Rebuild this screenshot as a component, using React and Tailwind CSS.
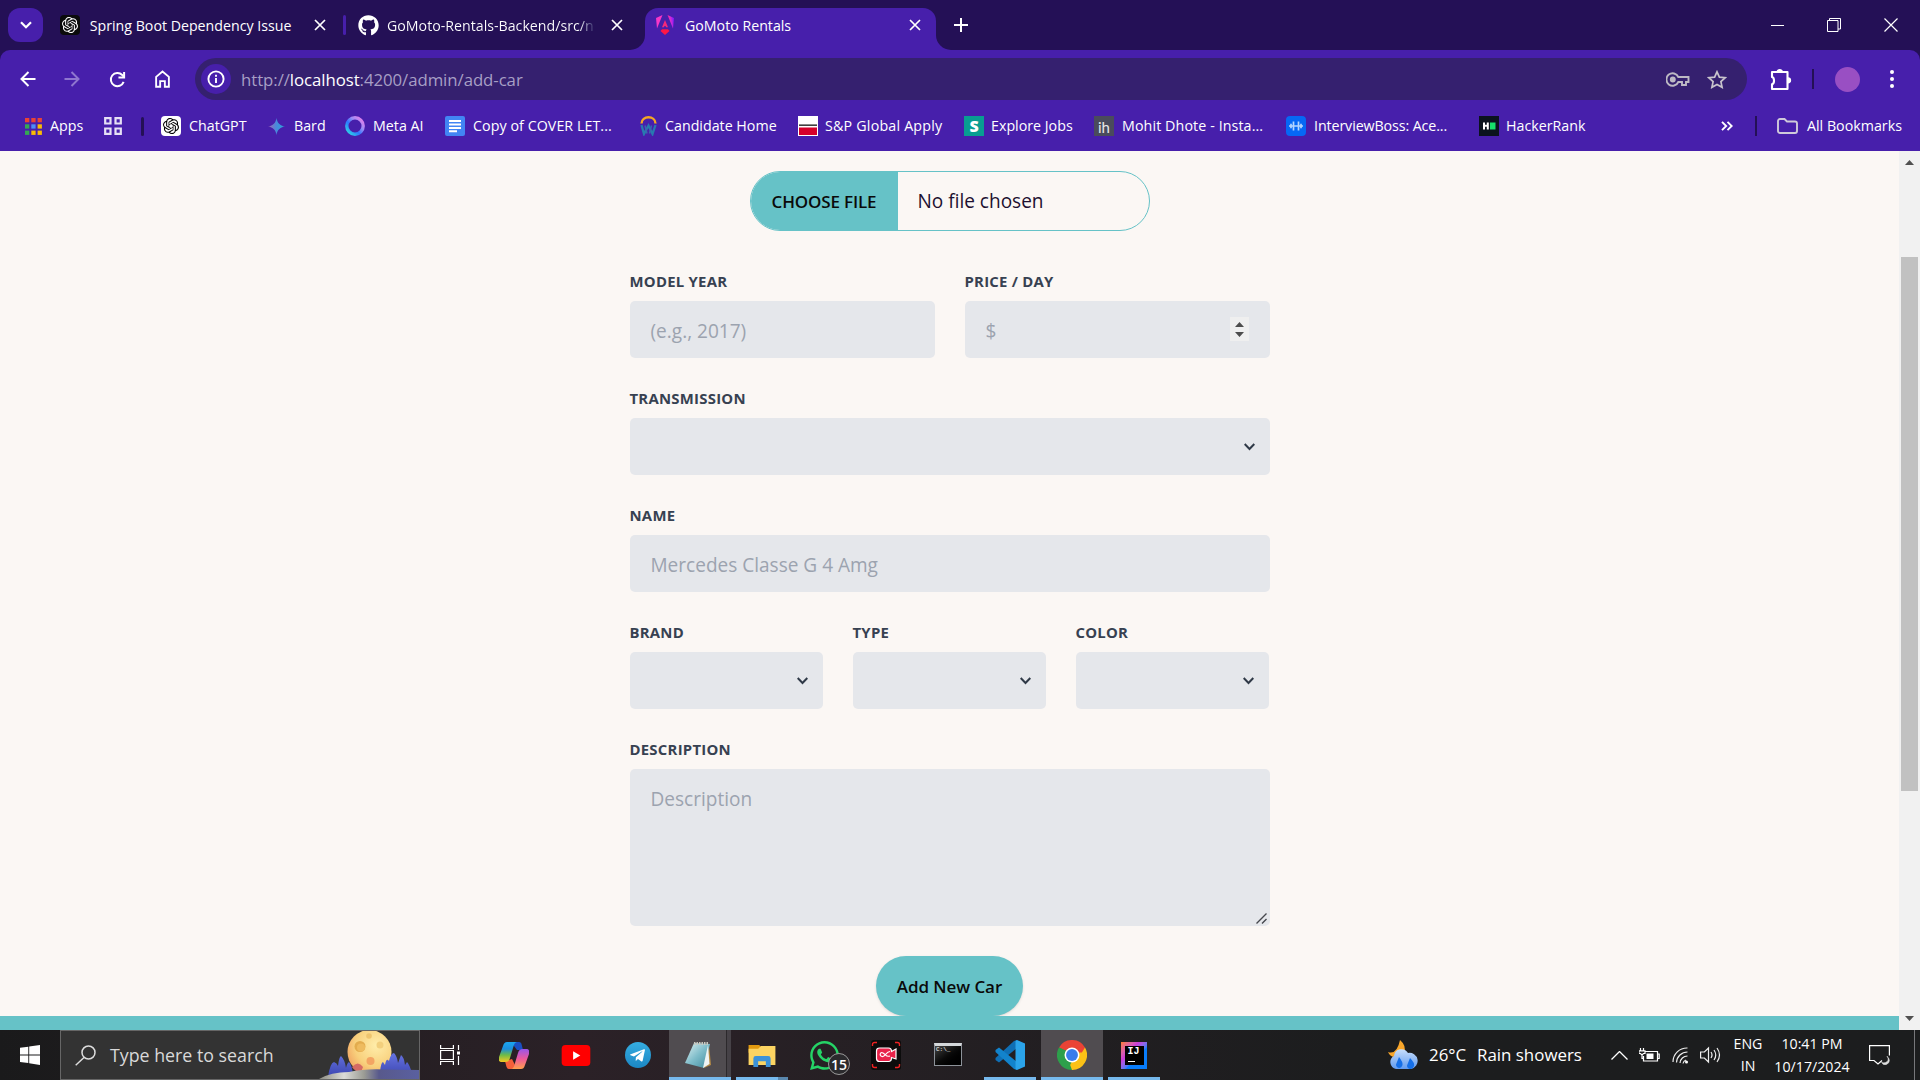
import React from "react";
import { SiOpenai } from "react-icons/si";
import { FaGithub, FaWhatsapp, FaTelegramPlane } from "react-icons/fa";

const Close = ({ className = "" }) => (
  <svg viewBox="0 0 12 12" className={`size-3 shrink-0 ${className}`} fill="none" stroke="#fff" strokeWidth="1.7">
    <path d="M1 1l10 10M11 1L1 11" />
  </svg>
);

const AngularLogo = () => (
  <svg viewBox="0 0 20 20" className="size-5 shrink-0">
    <defs>
      <linearGradient id="ng" x1="0" y1=".6" x2="1" y2=".3">
        <stop offset="0" stopColor="#ff2a6a" />
        <stop offset=".45" stopColor="#e02bd0" />
        <stop offset="1" stopColor="#7a18ff" />
      </linearGradient>
    </defs>
    <path d="M7.5 0L1 3l1 10.5z" fill="#f637c8" />
    <path d="M12.5 0L19 3l-1 10.5z" fill="url(#ng)" />
    <path d="M10 5l-3 7.3h1.9l.6-1.4h1l.6 1.4H13z" fill="#f5297a" />
    <path d="M5.5 16L7 14.3h6l1.5 1.7L10 20z" fill="#ff1745" />
  </svg>
);

function TabStrip() {
  return (
    <div className="flex h-[50px] bg-[#241056] text-[14.2px] text-white">
      <div className="ml-2 mt-2 flex h-[34px] w-[35px] items-center justify-center rounded-[12px] bg-[#471fab]">
        <svg viewBox="0 0 12 8" className="h-2 w-3" fill="none" stroke="#fff" strokeWidth="2.2"><path d="M1 1.2l5 5 5-5" /></svg>
      </div>
      <div className="flex h-[50px] w-[303px] items-center pl-[17px]">
        <span className="flex size-5 items-center justify-center rounded bg-[#0b0b0b]"><SiOpenai className="size-4" /></span>
        <span className="mt-px ml-2.5 w-[227px] whitespace-nowrap">Spring Boot Dependency Issue</span>
        <Close />
        <span className="ml-[17px] h-5 w-[3px] rounded bg-[#471fab]" />
      </div>
      <div className="flex h-[50px] w-[284px] items-center pl-[12px]">
        <FaGithub className="size-[21px] shrink-0" />
        <span className="mt-px ml-[8px] w-[209px] whitespace-nowrap bg-gradient-to-r from-white from-92% to-[#241056] bg-clip-text text-transparent">GoMoto-Rentals-Backend/src/n</span>
        <Close className="ml-[15px]" />
      </div>
      <div className="flex w-[321px] items-end">
        <span className="h-[15px] w-[15px] bg-[#471fab]"><i className="block size-full rounded-br-[15px] bg-[#241056]" /></span>
        <div className="flex h-[42px] w-[291px] items-center rounded-t-[13px] bg-[#471fab] pb-2 pl-[10px]">
          <AngularLogo />
          <span className="mt-px ml-2.5 w-[224px]">GoMoto Rentals</span>
          <Close />
        </div>
        <span className="h-[15px] w-[15px] bg-[#471fab]"><i className="block size-full rounded-bl-[15px] bg-[#241056]" /></span>
      </div>
      <svg viewBox="0 0 14 14" className="ml-[3px] mt-[18px] size-3.5" fill="none" stroke="#fff" strokeWidth="2"><path d="M7 0v14M0 7h14" /></svg>
      <div className="ml-auto mr-[22px] flex items-center gap-[43px]">
        <span className="h-px w-[13px] bg-white" />
        <svg viewBox="0 0 14 14" className="size-3.5" fill="none" stroke="#fff"><path d="M.5 2.5h10.5v11H.5zM2.5 2.5V.5h11v10.5H11" /></svg>
        <svg viewBox="0 0 14 14" className="size-3.5" fill="none" stroke="#fff" strokeWidth="1.2"><path d="M.5.5l13 13M13.5.5l-13 13" /></svg>
      </div>
    </div>
  );
}

function Toolbar() {
  return (
    <div className="bg-[#241056]">
      <div className="flex h-[58px] items-center rounded-t-[10px] bg-[#471fab] pl-5">
        <svg viewBox="0 0 16 16" className="size-4" fill="none" stroke="#fff" strokeWidth="2"><path d="M15.5 8H2M8.5 1L1.5 8l7 7" /></svg>
        <svg viewBox="0 0 16 16" className="ml-7 size-4" fill="none" stroke="#8f76cf" strokeWidth="2"><path d="M.5 8H14M7.5 1l7 7-7 7" /></svg>
        <svg viewBox="0 0 18 18" className="ml-[29px] size-[17px]" fill="none" stroke="#fff" strokeWidth="2.1"><path d="M15.5 11.5A7 7 0 1 1 14 4.2l1.5 1.8" /><path d="M16 1v5.8h-6" /></svg>
        <svg viewBox="0 0 16 19" className="ml-[29px] h-[18px] w-[15px]" fill="none" stroke="#fff" strokeWidth="2"><path d="M1.2 7.2L8 1.5l6.8 5.7v10.6h-4.3v-6h-5v6H1.2z" /></svg>
        <div className="ml-[25px] flex h-[42px] w-[1552px] items-center rounded-full bg-[#35206f] pl-1.5">
          <span className="flex size-[30px] items-center justify-center rounded-full bg-[#471fab]">
            <svg viewBox="0 0 18 18" className="size-[18px]" fill="none" stroke="#fff" strokeWidth="1.9"><circle cx="9" cy="9" r="7.6" /><path d="M9 8v5M9 4.8v1.9" /></svg>
          </span>
          <span className="mt-px ml-[10px] text-[16.8px] tracking-[-0.06px] text-[#a79fc5]">http://<span className="text-white">localhost</span>:4200/admin/add-car</span>
          <svg viewBox="0 0 24 15" className="ml-auto h-[15px] w-6" fill="none" stroke="#bdb9c4" strokeWidth="1.9"><path d="M12.3 5A6.2 6.2 0 1 0 12.3 10h3.7v3h4v-3h2.5V5z" /><circle cx="6.8" cy="7.5" r="2" fill="#bdb9c4" /></svg>
          <svg viewBox="0 0 20 19" className="ml-[17px] mr-5 h-[19px] w-5" fill="none" stroke="#c8c4cc" strokeWidth="1.7"><path d="M10 1.8l2.4 5.3 5.8.6-4.3 3.9 1.2 5.7-5.1-2.9-5.1 2.9 1.2-5.7L1.8 7.7l5.8-.6z" /></svg>
        </div>
        <svg viewBox="0 0 22 23" className="ml-[23px] h-[23px] w-[22px]" fill="none" stroke="#fff" strokeWidth="2.1"><path d="M2 4h15.5v17H2v-4.700c2.700-.8 2.700-6.500 0-7.300z" strokeLinejoin="round" /><path d="M7.500 4a2.300 2.500 0 0 1 4.500 0zM18 10.200a2 2 0 0 1 0 4.200z" fill="#fff" /></svg>
        <span className="ml-5 h-5 w-0.5 bg-[#241056]" />
        <span className="ml-[21px] size-[25px] rounded-full bg-[#994fc3]" />
        <svg viewBox="0 0 4 18" className="ml-[30px] h-[18px] w-1" fill="#fff"><circle cx="2" cy="2" r="2" /><circle cx="2" cy="9" r="2" /><circle cx="2" cy="16" r="2" /></svg>
      </div>
    </div>
  );
}

const Bookmark = ({ w, gap = "gap-2", label, children }) => (
  <div className={`flex shrink-0 items-center whitespace-nowrap ${w} ${gap}`}>{children}<span>{label}</span></div>
);

const appDots = ["#ea4335", "#ea4335", "#ea4335", "#34a853", "#4b8df8", "#fbbc04", "#34a853", "#fbbc04", "#fbbc04"];

function Bookmarks() {
  return (
    <div className="flex h-[43px] items-center bg-[#471fab] pb-[7px] pl-[25px] text-[14.25px] text-white">
      <Bookmark w="w-[79px]" label="Apps">
        <svg viewBox="0 0 17 17" className="size-[17px]">{appDots.map((c, i) => <rect key={i} x={(i % 3) * 6.3} y={Math.floor(i / 3) * 6.3} width="4.3" height="4.3" fill={c} />)}</svg>
      </Bookmark>
      <svg viewBox="0 0 18 18" className="size-[18px]" fill="none" stroke="#e6e0f5" strokeWidth="2.2"><path d="M1.2 1.2h5.3v5.3H1.2zM11.5 1.2h5.3v5.3h-5.3zM1.2 11.5h5.3v5.3H1.2zM11.5 11.5h5.3v5.3h-5.3z" /></svg>
      <span className="ml-[19px] mr-[17px] h-[19px] w-[3px] rounded bg-[#241056]" />
      <Bookmark w="w-[107px]" label="ChatGPT"><span className="flex size-5 items-center justify-center rounded bg-white"><SiOpenai className="size-4 text-black" /></span></Bookmark>
      <Bookmark w="w-[77px]" gap="gap-[9px]" label="Bard">
        <svg viewBox="0 0 17 17" className="size-[17px]"><defs><linearGradient id="bd"><stop stopColor="#a166b4" /><stop offset=".5" stopColor="#4889dc" /><stop offset="1" stopColor="#2aa3d6" /></linearGradient></defs><path d="M8.5 0c.7 5 3.5 7.8 8.5 8.5-5 .7-7.8 3.5-8.5 8.5C7.8 12 5 9.2 0 8.5 5 7.8 7.8 5 8.5 0z" fill="url(#bd)" /></svg>
      </Bookmark>
      <Bookmark w="w-[100px]" label="Meta AI">
        <svg viewBox="0 0 20 20" className="size-5"><defs><linearGradient id="me" x1="1" y1="0" x2="0" y2="1"><stop stopColor="#f47be8" /><stop offset=".35" stopColor="#9b8cf5" /><stop offset=".6" stopColor="#2c77ff" /><stop offset="1" stopColor="#2fe5df" /></linearGradient></defs><circle cx="10" cy="10" r="8.2" fill="none" stroke="url(#me)" strokeWidth="3.4" /></svg>
      </Bookmark>
      <Bookmark w="w-[195px]" label={<span className="tracking-[0.06px]">Copy of COVER LET...</span>}>
        <svg viewBox="0 0 20 20" className="size-5"><rect width="20" height="20" rx="2" fill="#4285f4" /><path d="M4 5h12M4 8.5h12M4 12h12M4 15.2h8" stroke="#fff" strokeWidth="1.9" /></svg>
      </Bookmark>
      <Bookmark w="w-[158px]" label="Candidate Home">
        <svg viewBox="0 0 17 20" className="h-5 w-[17px]" fill="none"><path d="M1.5 7.5C1.5-.8 15.5-.8 15.5 7.500" stroke="#f5a623" strokeWidth="2.4" /><path d="M1.500 9l2.500 9 4.500-8.500L12.500 18l3-9" stroke="#2879b0" strokeWidth="2.3" /><path d="M5 9.500l2 8M11.500 9.500l-2 8" stroke="#3a66b0" strokeWidth="1.5" /></svg>
      </Bookmark>
      <Bookmark w="w-[166px]" gap="gap-[7px]" label={<span className="tracking-[0.2px]">S&P Global Apply</span>}>
        <svg viewBox="0 0 20 20" className="size-5"><rect width="20" height="20" fill="#fff" /><path d="M1 8.500h18v1.300H1z" fill="#111" /><path d="M1 11.500h18V19H1z" fill="#d6002a" /></svg>
      </Bookmark>
      <Bookmark w="w-[130px]" gap="gap-[7px]" label="Explore Jobs"><span className="flex size-5 items-center justify-center bg-[#089d92] text-[16px] leading-5 font-extrabold">S</span></Bookmark>
      <Bookmark w="w-[192px]" label={<span className="tracking-[0.1px]">Mohit Dhote - Insta...</span>}><span className="flex size-5 items-center justify-center bg-[#4a4b5c] pt-0.5 font-[Lato] text-[15px] leading-none text-[#e8e8e8]">ih</span></Bookmark>
      <Bookmark w="w-[193px]" label={<span className="tracking-[-0.1px]">InterviewBoss: Ace...</span>}>
        <svg viewBox="0 0 20 20" className="size-5" fill="none" stroke="#b4d5ff" strokeWidth="1.7"><rect width="20" height="20" rx="4" fill="#0668f5" stroke="none" /><path d="M3 10h14M7.5 5.5v9M12.5 5.5v9M5 7.8v4.4M15 7.8v4.4" /></svg>
      </Bookmark>
      <Bookmark w="w-[242px]" gap="gap-[7px]" label="HackerRank">
        <svg viewBox="0 0 20 20" className="size-5"><rect width="20" height="20" fill="#0b131e" /><path d="M4 6.5h2v2.300h1.800V6.500h2v7h-2v-2.800H6v2.800H4z" fill="#fff" /><path d="M11 6.500h5.500v7H11z" fill="#17e06b" /></svg>
      </Bookmark>
      <svg viewBox="0 0 12 10" className="h-2.5 w-3" fill="none" stroke="#fff" strokeWidth="1.9"><path d="M1 .8L5.2 5 1 9.2M6.5.8L10.700 5 6.500 9.200" /></svg>
      <span className="ml-[22px] mr-5 h-5 w-0.5 bg-[#241056]" />
      <Bookmark w="w-[130px]" gap="gap-[9px]" label="All Bookmarks">
        <svg viewBox="0 0 21 16" className="h-4 w-[21px]" fill="none" stroke="#cfc9da" strokeWidth="1.9"><path d="M1 3a2 2 0 0 1 2-2h4.500l2.500 2.500H18a2 2 0 0 1 2 2V13a2 2 0 0 1-2 2H3a2 2 0 0 1-2-2z" /></svg>
      </Bookmark>
    </div>
  );
}

const Field = ({ label, placeholder, type, w = "w-full", h = "h-[57px]" }) => (
  <div className={w}>
    <div className="mb-2.5 h-5 text-[14.9px] leading-5 font-bold tracking-[0.25px] text-[#374151] uppercase">{label}</div>
    <div className={`relative flex justify-between rounded-[5px] bg-[#e5e7eb] px-[21px] pt-[15px] text-[19.05px] leading-[30px] text-[#9ca3af] ${h}`}>
      <span>{placeholder}</span>
      {type === "number" && (
        <svg viewBox="0 0 19 24" className="mt-px h-6 w-[19px]"><rect width="19" height="24" fill="#efefef" /><path d="M5 10l4.5-5 4.5 5zM5 15l4.5 5 4.5-5z" fill="#4d4d4d" /></svg>
      )}
      {type === "select" && (
        <svg viewBox="0 0 11 8" className="mt-[10px] -mr-[6.5px] h-2 w-[11px]" fill="none" stroke="#2f3947" strokeWidth="2"><path d="M.7 1l4.8 5 4.8-5" /></svg>
      )}
      {type === "area" && (
        <svg viewBox="0 0 11 11" className="absolute right-[3px] bottom-[2px] size-[11px]" stroke="#45474d" strokeWidth="1.4"><path d="M.5 10.5l10-10M6 10.5L10.5 6" /></svg>
      )}
    </div>
  </div>
);

function Page() {
  return (
    <div className="flex h-[879px] bg-[#fbf7f4]">
      <div className="flex grow flex-col items-center pt-5">
        <div className="flex h-[60px] w-[400px] overflow-hidden rounded-[30px] border border-[#66c2c7] text-[19.05px] text-[#1d1030]">
          <span className="flex w-[147px] items-center justify-center bg-[#66c2c7] pt-px text-[17px] font-semibold tracking-[-0.15px] text-[#0a0a0a]">CHOOSE FILE</span>
          <span className="flex items-center pt-px pl-5">No file chosen</span>
        </div>
        <div className="mt-10 flex w-[640px] flex-col gap-[30px]">
          <div className="flex gap-[30px]">
            <Field label="Model Year" placeholder="(e.g., 2017)" w="w-[305px]" />
            <Field label="Price / Day" placeholder="$" type="number" w="w-[305px]" />
          </div>
          <Field label="Transmission" type="select" />
          <Field label="Name" placeholder="Mercedes Classe G 4 Amg" />
          <div className="flex gap-[30px]">
            <Field label="Brand" type="select" w="w-[193px]" />
            <Field label="Type" type="select" w="w-[193px]" />
            <Field label="Color" type="select" w="w-[193px]" />
          </div>
          <Field label="Description" placeholder="Description" type="area" h="h-[157px]" />
        </div>
        <button className="mt-[30px] h-[60px] w-[147px] shrink-0 rounded-[30px] bg-[#66c2c7] pt-px text-[17px] font-semibold tracking-[-0.08px] text-[#0a0a0a] shadow-sm">Add New Car</button>
        <div className="h-3.5 w-full shrink-0 bg-[#66c2c7]" />
      </div>
      <div className="flex w-[21px] flex-col items-center bg-[#f1f1f1]">
        <svg viewBox="0 0 9 5" className="mt-[9px] h-[5px] w-[9px]"><path d="M0 5l4.5-5L9 5z" fill="#505050" /></svg>
        <div className="mt-[92px] h-[534px] w-[17px] bg-[#c1c1c1]" />
        <svg viewBox="0 0 9 5" className="mt-auto mb-[9px] h-[5px] w-[9px]"><path d="M0 0l4.5 5L9 0z" fill="#505050" /></svg>
      </div>
    </div>
  );
}

const MoonArt = () => (
  <svg viewBox="0 0 100 48" className="ml-auto h-12 w-[100px]">
    <defs>
      <radialGradient id="mn" cx=".65" cy=".35" r=".8"><stop stopColor="#ffedaa" /><stop offset=".6" stopColor="#f8d07c" /><stop offset="1" stopColor="#ef9a5c" /></radialGradient>
      <linearGradient id="hl"><stop stopColor="#8b8a80" /><stop offset=".25" stopColor="#dcdcd8" /><stop offset=".45" stopColor="#9b9c94" /><stop offset=".6" stopColor="#58598c" /><stop offset="1" stopColor="#5a60a0" /></linearGradient>
      <linearGradient id="tr" x2="0" y2="1"><stop stopColor="#6673e0" /><stop offset="1" stopColor="#3b45b0" /></linearGradient>
    </defs>
    <circle cx="50.5" cy="21" r="22" fill="url(#mn)" />
    <circle cx="41" cy="15.5" r="5.5" fill="#e3ac4e" /><circle cx="42" cy="16.5" r="4" fill="#eebb5f" />
    <circle cx="61" cy="14" r="3.5" fill="#f2cf7d" /><circle cx="50" cy="5" r="2.8" fill="#eec46e" />
    <circle cx="51.5" cy="30" r="4" fill="#f3a563" /><path d="M33 36q6-7 11 0l-2 5q-6 0-9-5z" fill="#d46a64" />
    <path d="M9 46q2-14 6-15 3 1 4 4 1-9 3-10 4 4 5 12 1-5 3-6 3 3 4 13zM61 41q1-10 3-10l2 3q1-6 3-5l1 1q2-8 5-8 3 3 4 10l3-8q3 2 4 10l2-3q2 2 4 8z" fill="url(#tr)" />
    <path d="M0 48q12-7 30-7 16-3.500 36-2.500L100 39v9z" fill="url(#hl)" />
  </svg>
);

const CopilotLogo = () => (
  <svg viewBox="0 0 30 27" className="h-[27px] w-[30px]">
    <defs>
      <linearGradient id="c1" x2="0" y2="1"><stop stopColor="#1ba6f0" /><stop offset=".35" stopColor="#1c8edc" /><stop offset=".65" stopColor="#6dbb48" /><stop offset="1" stopColor="#f6c921" /></linearGradient>
      <linearGradient id="c2" x2="0" y2="1"><stop stopColor="#9a55ea" /><stop offset=".5" stopColor="#ee5a9a" /><stop offset="1" stopColor="#ffa04b" /></linearGradient>
    </defs>
    <path d="M12 0h8c2 0 2.500 2 3 4l1 4h-6z" fill="#1a4fc4" />
    <path d="M18 27h-8c-2 0-2.500-2-3-4l-1-4 7-2z" fill="#f5603a" />
    <path d="M8 0h10c-2 0-3 2-4 6l-3 10c-1 3-2 4-5 4H3c-3 0-4-2-3-5L4 4c1-3 2-4 4-4z" fill="url(#c1)" />
    <path d="M22 27H12c2 0 3-2 4-6l3-10c1-3 2-4 5-4h3c3 0 4 2 3 5l-4 11c-1 3-2 4-4 4z" fill="url(#c2)" />
  </svg>
);

const NotepadIcon = () => (
  <svg viewBox="0 0 28 28" className="-ml-1 size-7">
    <defs><linearGradient id="np" x2="1" y2="1"><stop stopColor="#e2f2f3" /><stop offset=".5" stopColor="#7fbdca" /><stop offset="1" stopColor="#3e8a9c" /></linearGradient></defs>
    <path d="M25 4l2 20-7 3z" fill="#b58b45" />
    <path d="M10 2l16 1-6 24L1 22z" fill="url(#np)" />
    <path d="M24 4l1.500 19-6.500 4z" fill="#eef3f3" />
    <path d="M10 2.500h15" stroke="#c9c9c0" strokeWidth="3" strokeDasharray="1.500 1" />
  </svg>
);

const ExplorerIcon = () => (
  <svg viewBox="0 0 28 24" className="h-[23px] w-7">
    <path d="M0 1h11l3 3v5H0z" fill="#e29a10" />
    <path d="M0 5h10l3-3h15v20H0z" fill="#fcd462" />
    <path d="M5 24V15q0-2.500 2.500-2.500h13Q23 12.500 23 15v9h-5v-6h-8v6z" fill="#3c92d8" />
  </svg>
);

const RecorderIcon = () => (
  <svg viewBox="0 0 30 30" className="size-[30px]" fill="none">
    <rect width="30" height="30" rx="3" fill="#0c0c0c" />
    <path d="M1.500 6V4.500a2 2 0 0 1 2-2H6M24 2.500h2.500a2 2 0 0 1 2 2V6M1.500 24v1.500a2 2 0 0 0 2 2H6M24 27.500h2.500a2 2 0 0 0 2-2V24" stroke="#e22" strokeWidth="1.4" />
    <path d="M8.500 8h9q3 0 3 3.500l4.500-2.500v10l-4.500-1.500q0 4-3 4h-9q-3 0-3-3V11q0-3 3-3z" fill="#e8234a" stroke="#fff" strokeWidth="1.2" />
    <path d="M19 11.500c-4 0-5 6-8 5s-2-5 1-3.500 3 4.500 7 3" stroke="#fff" strokeWidth="1.1" />
  </svg>
);

const CmdIcon = () => (
  <span className="-mt-0.5 flex h-[23px] w-7 flex-col border border-[#8d9299] border-t-[3px] border-t-[#d4d7da] bg-gradient-to-br from-[#454545] via-[#0a0a0a] to-black pl-px font-['Liberation_Mono'] text-[6px] leading-[8px] text-white">C:\_</span>
);

const VsCodeIcon = () => (
  <svg viewBox="0 0 30 30" className="size-[30px]">
    <path d="M22 0v8L4 22.500.5 20v-2L19 1z" fill="#0f6fb5" />
    <path d="M22 30v-8L4 7.500.5 10v2L19 29z" fill="#1283cc" />
    <path d="M22 0l8 3.500v23L22 30l-1.500-1V1z" fill="#2ba4ea" />
  </svg>
);

const ChromeIcon = () => (
  <svg viewBox="0 0 48 48" className="size-[30px]">
    <path d="M24 24L3.200 12A24 24 0 0 1 44.800 12z" fill="#ea4335" />
    <path d="M24 24L44.800 12A24 24 0 0 1 24 48z" fill="#fbc116" />
    <path d="M24 24v24A24 24 0 0 1 3.200 12z" fill="#2d9f4b" />
    <path d="M24 12h20.800l-5 8H24z" fill="#ea4335" /><path d="M34.400 30L24 48l-3-8 6-12z" fill="#fbc116" /><path d="M13.600 30L3.200 12 15 17l5 12z" fill="#2d9f4b" />
    <circle cx="24" cy="24" r="12" fill="#fff" /><circle cx="24" cy="24" r="9.500" fill="#3a7cec" />
  </svg>
);

const IdeaIcon = () => (
  <span className="flex h-[27px] w-[26px] items-center justify-center bg-gradient-to-br from-[#ff7a1a] via-[#c93ad8] via-35% to-[#087cfa] to-60%">
    <span className="flex size-[19px] flex-col bg-black pl-[3px] font-['Liberation_Mono'] text-[10px] leading-[12px] font-bold text-white">IJ<i className="mt-[3px] h-px w-[7px] bg-white" /></span>
  </span>
);

const Task = ({ children, line, active }) => (
  <div className={`relative flex w-[62px] shrink-0 items-center justify-center ${active ? "bg-[#504c50]" : ""}`}>
    {children}
    {line && <span className={`absolute bottom-0 h-[3px] bg-[#76b9ed] ${line}`} />}
  </div>
);

function Taskbar() {
  return (
    <div className="flex h-[50px] bg-gradient-to-r from-[#1a1a1b] via-[#2b2127] via-30% to-[#1c1d1e] to-70% text-white">
      <div className="flex w-[60px] items-center justify-center">
        <svg viewBox="0 0 20 20" className="size-5" fill="#fff"><path d="M0 2.800L8.300 1.700v7.700H0zM9.200 1.500L20 0v9.400H9.200zM0 10.400h8.300V18L0 16.900zM9.200 10.400H20V20L9.200 18.300z" /></svg>
      </div>
      <div className="flex w-[360px] items-center border border-[#666] bg-[#333]">
        <svg viewBox="0 0 21 21" className="ml-3.5 size-[21px]" fill="none" stroke="#ddd" strokeWidth="1.5"><circle cx="13.5" cy="7.5" r="6.5" /><path d="M9 12.5L.7 20.3" /></svg>
        <span className="ml-3.5 text-[17.8px] whitespace-nowrap text-[#d9d9d9]">Type here to search</span>
        <MoonArt />
      </div>
      <div className="flex w-[63px] items-center pl-5">
        <svg viewBox="0 0 21 20" className="h-5 w-[21px]" fill="none" stroke="#fff" strokeWidth="1.2"><path d="M.6 0v3.5h12.8V0M.6 20v-3.5h12.8V20M.6 5.5h12.8v9H.6zM18.5 0v5M18.5 11v9" /><path d="M17 6.5h3v3h-3z" fill="#fff" stroke="none" /></svg>
      </div>
      <Task><CopilotLogo /></Task>
      <Task><svg viewBox="0 0 30 22" className="h-[21px] w-[30px]"><rect width="30" height="22" rx="4" fill="#f00" /><path d="M12 6.5l7.5 4.5-7.5 4.5z" fill="#fff" /></svg></Task>
      <Task><span className="flex size-[26px] items-center justify-center rounded-full bg-gradient-to-b from-[#35ade1] to-[#1b87c4]"><FaTelegramPlane className="mr-0.5 size-[17px]" /></span></Task>
      <Task active line="inset-x-0"><NotepadIcon /><span className="absolute inset-y-0 right-0 w-[5px] border-l border-[#2c292c] bg-[#403c41]/60" /></Task>
      <Task line="inset-x-[5px]"><ExplorerIcon /><span className="absolute right-[5px] bottom-0 z-10 h-[3px] w-[10px] bg-[#5a87ad]" /></Task>
      <Task>
        <FaWhatsapp className="size-[33px] text-[#25d366]" />
        <span className="absolute top-[23px] left-[35px] flex size-[22px] items-center justify-center rounded-full border border-[#999] bg-[#2b2a2d] text-[14px] font-semibold">15</span>
      </Task>
      <Task><RecorderIcon /></Task>
      <Task><CmdIcon /></Task>
      <Task line="inset-x-[5px]"><VsCodeIcon /></Task>
      <Task active line="inset-x-0"><ChromeIcon /></Task>
      <Task line="inset-x-[5px]"><IdeaIcon /></Task>
      <div className="ml-auto flex items-center">
        <svg viewBox="0 0 30 30" className="size-[30px]">
          <defs><linearGradient id="cl" x2="0" y2="1"><stop stopColor="#c8defa" /><stop offset="1" stopColor="#5f9af0" /></linearGradient></defs>
          <path d="M12 0q7 6 4 13l-9 4q-5 0-7-5 9 3 12-12z" fill="#f8a62a" />
          <path d="M8 29a7 7 0 0 1-2-13 7.5 7.5 0 0 1 14-3 8 8 0 0 1 3 16z" fill="url(#cl)" />
          <path d="M11 17q4 5 3.5 8-1 3-3.5 3-3-1-3-3.5zM22 18q5 5 4 8-1 3-4 3-3-1-3-3.5z" fill="#156fe8" />
        </svg>
        <span className="ml-[11px] w-12 text-[16.9px] whitespace-nowrap">26°C</span>
        <span className="w-[134px] text-[16.9px] whitespace-nowrap">Rain showers</span>
        <svg viewBox="0 0 17 9" className="h-[9px] w-[17px]" fill="none" stroke="#fff" strokeWidth="1.3"><path d="M.5 8.5l8-8 8 8" /></svg>
        <svg viewBox="0 0 21 14" className="ml-[11px] h-3.5 w-[21px]" fill="none" stroke="#fff" strokeWidth="1.2"><path d="M6 3.5h12.5v9.5H4.5V8M18.5 6h1.7v4.5h-1.7M1.5 0v2.5M4.5 0v2.5M0 2.8h6v2.7H4.5L3 7 1.5 5.5H0zM3 7v3.5h1.500" /><path d="M7.500 5.500h7V11h-7z" fill="#fff" stroke="none" /></svg>
        <svg viewBox="0 0 17 17" className="ml-3 size-[17px]" fill="none" stroke="#eee" strokeWidth="1.2"><path d="M1 15A14 14 0 0 1 15.5 1M4.500 15.500A11 11 0 0 1 15.500 5M8 16A7.500 7.500 0 0 1 15.500 9M11 16.500a4.500 4.500 0 0 1 3-3.500" /><circle cx="14.5" cy="15" r="1.5" fill="#fff" stroke="none" /></svg>
        <svg viewBox="0 0 21 18" className="ml-[11px] h-[18px] w-[21px]" fill="none" stroke="#eee" strokeWidth="1.2"><path d="M.6 6h3.800L8.500 2v14l-4.100-4H.6zM11 6q2 3 0 6M14 4q3.500 5 0 10M17 2q5 7 0 14" /></svg>
        <div className="ml-2.5 flex w-[34px] flex-col items-center text-[14.2px] leading-[22px]"><span>ENG</span><span>IN</span></div>
        <div className="ml-[9px] flex w-[76px] flex-col items-center text-[14.2px] leading-[23px]"><span>10:41 PM</span><span>10/17/2024</span></div>
        <svg viewBox="0 0 22 20" className="ml-[19px] h-5 w-[22px]" fill="none" stroke="#fff" strokeWidth="1.2"><path d="M13 15.500l-4 3.500-4-3.500H.6V.6h19.800v10" /><path d="M18 11q3 5-1.500 6.500-2 .8-4-.3 1.500 3.500 5 2.200 5.500-2.700.5-8.400z" fill="#ddd" stroke="#ddd" strokeWidth=".5" /></svg>
        <span className="mr-[5px] ml-[23px] h-[50px] w-px bg-[#77777a]" />
      </div>
    </div>
  );
}

export default function App() {
  return (
    <div className="flex h-[1080px] w-[1920px] flex-col overflow-hidden font-['Open_Sans','Noto_Sans',sans-serif]">
      <TabStrip />
      <Toolbar />
      <Bookmarks />
      <Page />
      <Taskbar />
    </div>
  );
}
